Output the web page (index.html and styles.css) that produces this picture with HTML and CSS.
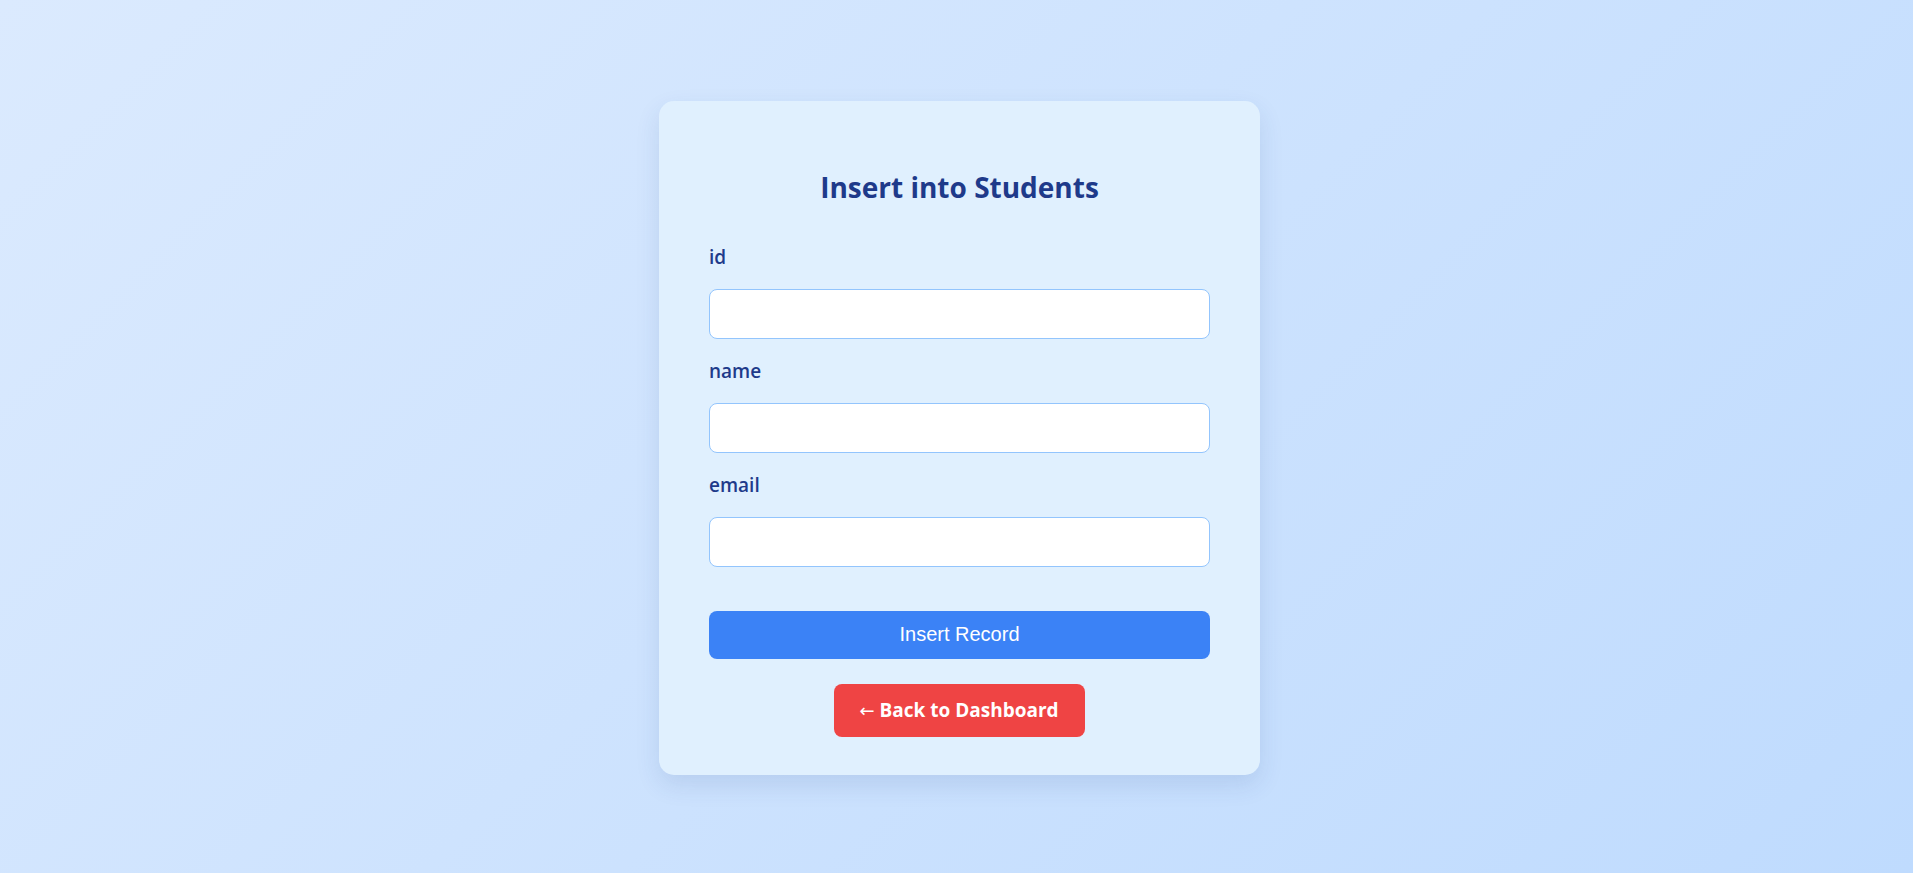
FILE: index.html
```html
<!DOCTYPE html>
<html lang="en">
<head>
<meta charset="utf-8">
<title>Insert into Students</title>
<link rel="stylesheet" href="styles.css">
</head>
<body>
  <main class="card">
    <h2 class="title">Insert into Students</h2>
    <form class="form">
      <label class="label" for="f-id">id</label>
      <input class="input" id="f-id" type="text">
      <label class="label" for="f-name">name</label>
      <input class="input" id="f-name" type="text">
      <label class="label" for="f-email">email</label>
      <input class="input" id="f-email" type="text">
      <button class="submit" type="button">Insert Record</button>
    </form>
    <div class="back-wrap">
      <a class="back" href="#"><span class="arrow">←</span> Back to Dashboard</a>
    </div>
  </main>
</body>
</html>
```

FILE: styles.css
```css
* { box-sizing: border-box; }

html, body { height: 100%; }

body {
  margin: 0;
  padding: 2px 0 0 6px;
  min-height: 100vh;
  display: flex;
  align-items: center;
  justify-content: center;
  background: linear-gradient(135deg, #dbeafe 0%, #bfdbfe 100%);
  font-family: "Open Sans", "Noto Sans", sans-serif;
  color: #1e3a8a;
}

.card {
  width: 601px;
  padding: 38px 50px;
  background: #e0f0fe;
  border-radius: 15px;
  box-shadow: 0 10px 25px rgba(30, 64, 130, 0.12);
}

.title {
  margin: 30px 0 39px;
  text-align: center;
  font-size: 28px;
  line-height: 36px;
  font-weight: 700;
  color: #1e3a8a;
}

.form {
  display: flex;
  flex-direction: column;
}

.label {
  display: block;
  font-size: 19px;
  line-height: 26px;
  font-weight: 600;
  color: #1e3a8a;
  margin-bottom: 19px;
}

.input {
  display: block;
  width: 100%;
  height: 50px;
  margin: 0 0 19px;
  padding: 0 12px;
  border: 1px solid #93c5fd;
  border-radius: 8px;
  background: #fff;
  font-size: 18px;
  font-family: inherit;
}

.input:last-of-type { margin-bottom: 0; }

.submit {
  margin-top: 44px;
  height: 48px;
  width: 100%;
  border: none;
  border-radius: 8px;
  background: #3b82f6;
  color: #fff;
  font-family: "Liberation Sans", Arial, sans-serif;
  font-size: 20px;
}

.back-wrap {
  margin-top: 25px;
  text-align: center;
}

.back {
  display: inline-block;
  padding: 12px 26px 12px 25px;
  line-height: 28px;
  background: #ef4444;
  color: #fff;
  border-radius: 8px;
  font-size: 19px;
  font-weight: 700;
  text-decoration: none;
}

.arrow {
  font-family: "DejaVu Sans", sans-serif;
  font-weight: 400;
  font-size: 18px;
}
```
